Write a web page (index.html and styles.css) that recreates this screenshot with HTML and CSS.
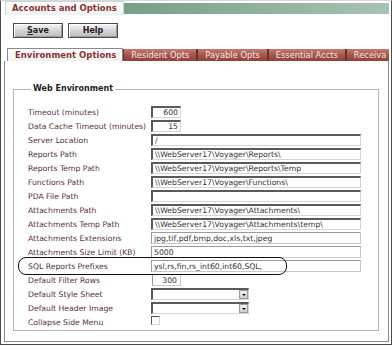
FILE: index.html
```html
<!DOCTYPE html>
<html lang="en">
<head>
    <meta charset="UTF-8">
    <title>Accounts and Options</title>
    <link rel="stylesheet" href="styles.css">
</head>
<body>
    <div class="frame">
        <div class="title-row">
            <div class="title-tab">Accounts and Options</div>
            <div class="title-fill"></div>
        </div>

        <div class="toolbar">
            <button class="btn"><u>S</u>ave</button>
            <button class="btn">Help</button>
        </div>

        <div class="tabs">
            <div class="tab active">Environment Options</div>
            <div class="tab">Resident Opts</div>
            <div class="tab">Payable Opts</div>
            <div class="tab">Essential Accts</div>
            <div class="tab">Receiva</div>
        </div>

        <div class="panel">
            <fieldset class="group">
                <legend>Web Environment</legend>
                <div class="form-grid">
                    <label>Timeout (minutes)</label>
                    <input class="field short num" type="text" value="600">

                    <label>Data Cache Timeout (minutes)</label>
                    <input class="field short num" type="text" value="15">

                    <label>Server Location</label>
                    <input class="field long" type="text" value="/">

                    <label>Reports Path</label>
                    <input class="field long" type="text" value="\\WebServer17\Voyager\Reports\">

                    <label>Reports Temp Path</label>
                    <input class="field long" type="text" value="\\WebServer17\Voyager\Reports\Temp">

                    <label>Functions Path</label>
                    <input class="field long" type="text" value="\\WebServer17\Voyager\Functions\">

                    <label>PDA File Path</label>
                    <input class="field long" type="text" value="">

                    <label>Attachments Path</label>
                    <input class="field long" type="text" value="\\WebServer17\Voyager\Attachments\">

                    <label>Attachments Temp Path</label>
                    <input class="field long" type="text" value="\\WebServer17\Voyager\Attachments\temp\">

                    <label>Attachments Extensions</label>
                    <input class="field long flat" type="text" value="jpg,tif,pdf,bmp,doc,xls,txt,jpeg">

                    <label>Attachments Size Limit (KB)</label>
                    <input class="field long flat" type="text" value="5000">

                    <label>SQL Reports Prefixes</label>
                    <input class="field long flat" type="text" value="ysl,rs,fin,rs_int60,int60,SQL,">

                    <label>Default Filter Rows</label>
                    <input class="field short num flat" type="text" value="300">

                    <label>Default Style Sheet</label>
                    <div class="select"><span class="arrow"></span></div>

                    <label>Default Header Image</label>
                    <div class="select"><span class="arrow"></span></div>

                    <label>Collapse Side Menu</label>
                    <div><span class="check"></span></div>
                </div>
            </fieldset>
        </div>
    </div>

    <!-- hand drawn highlight round the SQL row -->
    <div class="highlight"></div>
</body>
</html>
```

FILE: styles.css
```css
* {
    margin: 0;
    padding: 0;
    box-sizing: border-box;
}

body {
    width: 392px;
    height: 346px;
    background: #fff;
    font-family: 'DejaVu Sans', Verdana, sans-serif;
    font-size: 7.7px;
    color: #333;
    overflow: hidden;
    position: relative;
}

.frame {
    height: 345px;
    border: 1px solid #4a4a4a;
    border-top-color: #d8d8d8;
    padding: 0 2px 2px 3px;
    display: flex;
    flex-direction: column;
}

/* Title row */
.title-row {
    display: flex;
    height: 14px;
}

.title-tab {
    margin-left: 1px;
    padding: 0 6px;
    height: 14px;
    line-height: 13px;
    font-size: 8.5px;
    font-weight: bold;
    color: #8c3232;
    background: linear-gradient(#ffffff, #eef3ee);
    border: 1px solid #cfd6cf;
    border-bottom: none;
    white-space: nowrap;
}

.title-fill {
    flex: 1;
    margin-top: 2px;
    height: 11px;
    background: linear-gradient(to right, #76a085, #a9c2b2);
}

/* Buttons */
.toolbar {
    display: flex;
    gap: 5px;
    margin: 8px 0 0 9px;
}

.btn {
    width: 50px;
    height: 15px;
    font-family: inherit;
    font-size: 8px;
    font-weight: bold;
    color: #222;
    background: linear-gradient(#f6f6f6, #d0d0d0 60%, #bcbcbc);
    border: 1px solid #4c4c4c;
    box-shadow: inset 1px 1px 0 #fff, inset -1px -1px 0 #999;
}

/* Tabs */
.tabs {
    display: flex;
    margin: 10px 0 0 3px;
    height: 13px;
    white-space: nowrap;
    overflow: hidden;
}

.tab {
    padding: 0 7px;
    height: 12px;
    margin-top: 1px;
    line-height: 12px;
    font-size: 8.3px;
    color: #f6e4e0;
    background: linear-gradient(#c27b70, #a4544a 55%, #8e4238);
    border-left: 2px solid #6e3028;
}

.tab:last-child {
    flex: 1;
}

.tab.active {
    height: 13px;
    margin-top: 0;
    padding: 0 6px 0 7px;
    font-size: 8.5px;
    font-weight: bold;
    color: #8c3232;
    background: linear-gradient(#ffffff, #eef3ee);
    border: 1px solid #8a8a8a;
    border-bottom: none;
}

.tab.active + .tab {
    border-left: 1px solid #6e3028;
}

/* Panel */
.panel {
    flex: 1;
    border: 1px solid #8a8a8a;
    border-top: none;
    padding: 23px 9px 0 8px;
}

.group {
    border: 1px solid #b4b4b4;
    height: 247px;
    padding: 0 0 0 14px;
}

.group legend {
    margin-left: 3px;
    padding: 0 2px;
    font-size: 8px;
    font-weight: bold;
    color: #1e1e1e;
    line-height: 10px;
}

.form-grid {
    display: grid;
    grid-template-columns: 123px 1fr;
    grid-auto-rows: 14px;
    align-items: center;
    margin-top: 11px;
}

.form-grid label {
    color: #55303a;
    white-space: nowrap;
}

.field {
    height: 12px;
    font-family: inherit;
    font-size: 7.7px;
    color: #333;
    padding: 0 2px;
    background: #fff;
    border: 1px solid #d4d4d4;
    border-top: 2px solid #5a5a5a;
    border-left: 2px solid #5a5a5a;
    outline: none;
}

.field.long {
    width: 210px;
}

.field.short {
    width: 30px;
}

.field.num {
    text-align: right;
}

.field.flat {
    border: 1px solid #c8c8c8;
    border-top-color: #9a9a9a;
    border-left-color: #9a9a9a;
}

.field.short.flat {
    width: 29px;
    margin-left: 1px;
    padding-right: 3px;
}

.select {
    position: relative;
    width: 98px;
    height: 12px;
    background: #fff;
    border: 1px solid #d4d4d4;
    border-top: 2px solid #5a5a5a;
    border-left: 2px solid #5a5a5a;
}

.select .arrow {
    position: absolute;
    right: 0;
    top: 0;
    width: 9px;
    height: 9px;
    background: linear-gradient(#f2f2f2, #cfcfcf);
    border: 1px solid #9a9a9a;
}

.select .arrow::after {
    content: '';
    position: absolute;
    left: 2px;
    top: 3px;
    border-left: 2px solid transparent;
    border-right: 2px solid transparent;
    border-top: 2px solid #111;
}

.check {
    display: block;
    width: 9px;
    height: 9px;
    margin-top: -4px;
    border: 1px solid #d4d4d4;
    border-top: 1px solid #555;
    border-left: 1px solid #555;
}

/* annotation drawn over the screenshot */
.highlight {
    position: absolute;
    left: 18px;
    top: 257px;
    width: 269px;
    height: 18px;
    border: 1.5px solid #111;
    border-radius: 8px;
}
```
